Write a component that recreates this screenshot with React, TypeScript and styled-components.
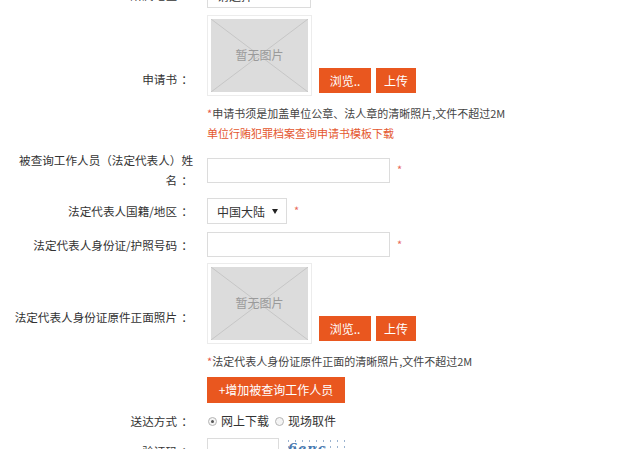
import { FC, ReactNode } from 'react'
import styled, { createGlobalStyle } from 'styled-components'

const GlobalStyle = createGlobalStyle`
  html, body {
    margin: 0;
    padding: 0;
    background: #fff;
    overflow: hidden;
  }
  body {
    font-family: "Noto Sans CJK SC", "Liberation Sans", sans-serif;
    font-size: 12px;
    color: #333;
  }
`

const orange = '#e9571f'

interface FieldProps {
  label?: string
  gap?: number
  children: ReactNode
}

const Field: FC<FieldProps> = ({ label, gap = 0, children }) => (
  <Row style={{ marginTop: gap }}>
    <Label>
      {label && (
        <>
          {label}
          <Colon>：</Colon>
        </>
      )}
    </Label>
    <Content>{children}</Content>
  </Row>
)

const NoPicture: FC = () => (
  <PicFrame>
    <PicInner>
      <svg width="97" height="73" viewBox="0 0 97 73">
        <line x1="0" y1="0" x2="97" y2="73" stroke="#c6c6c6" strokeWidth="1" />
        <line x1="97" y1="0" x2="0" y2="73" stroke="#c6c6c6" strokeWidth="1" />
      </svg>
      <PicText>暂无图片</PicText>
    </PicInner>
  </PicFrame>
)

const Upload: FC<{ hint: string; link?: string }> = ({ hint, link }) => (
  <>
    <UploadLine>
      <NoPicture />
      <Buttons>
        <OrangeButton>浏览..</OrangeButton>
        <OrangeButton>上传</OrangeButton>
      </Buttons>
    </UploadLine>
    <Hint>
      <Star>*</Star>
      {hint}
    </Hint>
    {link && <TemplateLink>{link}</TemplateLink>}
  </>
)

const App: FC = () => (
  <>
    <GlobalStyle />
    <Page>
      <Field label="所属地区">
        <Select $width={104}>
          <span>请选择</span>
        </Select>
      </Field>

      <Field label="申请书" gap={7}>
        <Upload
          hint="申请书须是加盖单位公章、法人章的清晰照片,文件不超过2M"
          link="单位行贿犯罪档案查询申请书模板下载"
        />
      </Field>

      <Field label="被查询工作人员（法定代表人）姓名" gap={7}>
        <Inline>
          <TextInput />
          <Required>*</Required>
        </Inline>
      </Field>

      <Field label="法定代表人国籍/地区" gap={8}>
        <Inline>
          <Select $width={80}>
            <span>中国大陆</span>
            <Arrow />
          </Select>
          <Required>*</Required>
        </Inline>
      </Field>

      <Field label="法定代表人身份证/护照号码" gap={8}>
        <Inline>
          <TextInput />
          <Required>*</Required>
        </Inline>
      </Field>

      <Field label="法定代表人身份证原件正面照片" gap={6}>
        <Upload hint="法定代表人身份证原件正面的清晰照片,文件不超过2M" />
      </Field>

      <Field gap={6}>
        <AddButton>+增加被查询工作人员</AddButton>
      </Field>

      <Field label="送达方式" gap={8}>
        <Inline>
          <Radio $checked />
          <RadioText>网上下载</RadioText>
          <Radio />
          <RadioText>现场取件</RadioText>
        </Inline>
      </Field>

      <Field label="验证码" gap={7}>
        <Inline>
          <CodeInput />
          <Captcha>
            <CaptchaText>6enc</CaptchaText>
          </Captcha>
        </Inline>
      </Field>
    </Page>
  </>
)

const Page = styled.div`
  width: 620px;
  margin-top: -18px;
`

const Row = styled.div`
  display: grid;
  grid-template-columns: 183px 1fr;
  column-gap: 14px;
  align-items: center;
  margin-left: 10px;
`

const Label = styled.div`
  text-align: right;
  font-size: 11.6px;
  line-height: 20px;
  color: #333;
`

const Colon = styled.span`
  display: inline-block;
  width: 12px;
  margin-left: 4px;
  text-align: center;
`

const Content = styled.div`
  display: flex;
  flex-direction: column;
  align-items: flex-start;
`

const Inline = styled.div`
  display: flex;
  align-items: center;
`

const Select = styled.div<{ $width: number }>`
  box-sizing: border-box;
  width: ${({ $width }) => $width}px;
  height: 26px;
  border: 1px solid #dcdcdc;
  display: flex;
  align-items: center;
  justify-content: space-between;
  padding: 0 7px 0 9px;
  color: #333;
`

const Arrow = styled.span`
  width: 0;
  height: 0;
  border-left: 3px solid transparent;
  border-right: 3px solid transparent;
  border-top: 5px solid #222;
  margin-right: 1px;
`

const TextInput = styled.div`
  box-sizing: border-box;
  width: 183px;
  height: 25px;
  border: 1px solid #dcdcdc;
`

const Required = styled.span`
  color: #e8685a;
  font-size: 11px;
  margin-left: 7px;
  margin-top: -2px;
`

const UploadLine = styled.div`
  display: flex;
  align-items: flex-end;
`

const PicFrame = styled.div`
  box-sizing: border-box;
  width: 105px;
  height: 81px;
  padding: 3px;
  border: 1px solid #ececec;
`

const PicInner = styled.div`
  position: relative;
  width: 97px;
  height: 73px;
  background: #dcdcdc;

  svg {
    display: block;
  }
`

const PicText = styled.span`
  position: absolute;
  left: 0;
  right: 0;
  top: 27px;
  text-align: center;
  color: #9a9a9a;
  line-height: 18px;
`

const Buttons = styled.div`
  display: flex;
  gap: 5px;
  margin: 0 0 3px 7px;
`

const OrangeButton = styled.div`
  height: 25px;
  line-height: 25px;
  padding: 0 8px;
  min-width: 23px;
  text-align: center;
  background: ${orange};
  color: #fff;
  &:first-child {
    width: 36px;
  }
`

const Hint = styled.div`
  margin-top: 7px;
  font-size: 11px;
  line-height: 20px;
  color: #444;
`

const Star = styled.span`
  color: #e8584a;
`

const TemplateLink = styled.div`
  font-size: 11px;
  line-height: 20px;
  color: #e4572e;
`

const AddButton = styled.div`
  width: 138px;
  height: 26px;
  line-height: 26px;
  text-align: center;
  background: ${orange};
  color: #fff;
`

const Radio = styled.span<{ $checked?: boolean }>`
  box-sizing: border-box;
  width: 9px;
  height: 9px;
  border-radius: 50%;
  border: 1px solid #b5b5b5;
  background: #f4f4f4;
  display: inline-flex;
  align-items: center;
  justify-content: center;
  margin: 0 4px 0 1px;

  &::after {
    content: '';
    width: 3px;
    height: 3px;
    border-radius: 50%;
    background: ${({ $checked }) => ($checked ? '#555' : 'transparent')};
  }
`

const RadioText = styled.span`
  line-height: 20px;
  margin-right: 5px;
`

const CodeInput = styled.div`
  box-sizing: border-box;
  width: 72px;
  height: 26px;
  border: 1px solid #dcdcdc;
`

const Captcha = styled.div`
  width: 60px;
  height: 26px;
  margin-left: 6px;
  background-image: radial-gradient(#9ab3d0 0.8px, transparent 1px);
  background-size: 7px 6px;
`

const CaptchaText = styled.span`
  font-family: "DejaVu Serif", serif;
  font-style: italic;
  font-weight: bold;
  font-size: 13px;
  letter-spacing: 1px;
  color: #4a7ab0;
  line-height: 22px;
  padding-left: 3px;
`

export default App
